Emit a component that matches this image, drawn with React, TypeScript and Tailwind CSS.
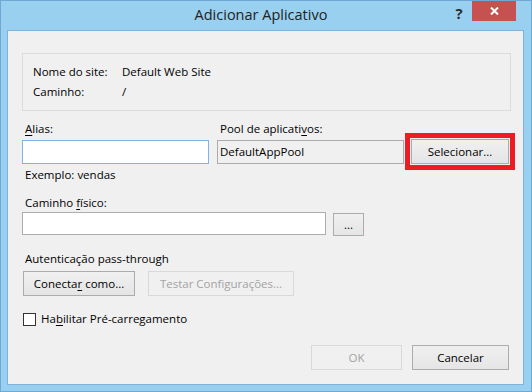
const font = { fontFamily: '"Open Sans", "Noto Sans", Arial, sans-serif' }

function Key({ children }: { children: string }) {
  return <span className="underline decoration-1 underline-offset-[2px]">{children}</span>
}

function Btn({
  children,
  className = '',
  disabled = false,
}: {
  children: React.ReactNode
  className?: string
  disabled?: boolean
}) {
  return (
    <button
      type="button"
      disabled={disabled}
      className={
        'flex h-[25px] items-center justify-center border text-[11.5px] leading-[16px] ' +
        (disabled
          ? 'border-[#d9d9d9] bg-[#f0f0f0] text-[#a3a3a3] '
          : 'border-[#acacac] bg-gradient-to-b from-[#f0f0f0] to-[#e5e5e5] text-black ') +
        className
      }
    >
      <span>{children}</span>
    </button>
  )
}

export default function App() {
  return (
    <div
      style={font}
      className="flex h-[392px] w-[532px] flex-col border border-[#6fa8d6] bg-[#99d0f0] text-[11.5px] leading-[16px] text-black"
    >
      {/* title bar */}
      <div className="grid h-[29px] shrink-0 grid-cols-[1fr_auto_1fr]">
        <div />
        <div className="mr-[10px] pt-[4px] text-[14.5px] leading-[20px] text-[#222]">Adicionar Aplicativo</div>
        <div className="flex items-start justify-end">
          <div className="mt-[4px] w-[26px] text-center text-[15px] font-bold leading-[16px] text-[#2b2b2b]">?</div>
          <div className="mr-[15px] flex h-[20px] w-[44px] items-center justify-center bg-[#c75050]">
            <svg width="9" height="8" viewBox="0 0 9 8">
              <path d="M1 0.5 L8 7.5 M8 0.5 L1 7.5" stroke="white" strokeWidth="2" />
            </svg>
          </div>
        </div>
      </div>

      {/* client area */}
      <div className="mb-[6px] ml-[6px] mr-[7px] flex flex-1 flex-col border border-[#7fb3db] bg-[#f0f0f0] pl-[14px] pr-[12px]">
        <div className="mt-[22px] h-[58px] border border-[#dcdcdc] pl-[10px] pt-[8px] leading-[20px]">
          <div className="grid grid-cols-[89px_1fr]">
            <span>Nome do site:</span>
            <span>Default Web Site</span>
            <span>Caminho:</span>
            <span>/</span>
          </div>
        </div>

        <div className="mt-[10px] flex">
          <div className="w-[187px]">
            <div className="pl-[3px]">
              <Key>A</Key>lias:
            </div>
            <div className="mt-[3px] h-[24px] border border-[#7eb4ea] bg-white" />
          </div>
          <div className="ml-[8px] w-[187px]">
            <div className="pl-[3px]">
              Pool de aplicati<Key>v</Key>os:
            </div>
            <div className="mt-[3px] flex h-[24px] items-center border border-[#acacac] bg-[#f0f0f0] pl-[2px]">
              DefaultAppPool
            </div>
          </div>
          <div className="relative ml-[7px] self-end">
            <Btn className="w-[98px]">
              Selecionar...
            </Btn>
            <div className="pointer-events-none absolute -inset-[6px] border-[5px] border-[#ed1c24]" />
          </div>
        </div>

        <div className="mt-[3px] pl-[3px]">Exemplo: vendas</div>

        <div className="mt-[12px] pl-[3px]">
          Caminho <Key>f</Key>ísico:
        </div>
        <div className="mt-[1px] flex items-start">
          <div className="h-[23px] w-[304px] border border-[#abadb3] bg-white" />
          <Btn className="ml-[7px] mt-[1px] !h-[23px] w-[31px]">...</Btn>
        </div>

        <div className="mt-[15px] pl-[3px]">Autenticação pass-through</div>
        <div className="mt-[4px] flex">
          <Btn className="ml-[1px] w-[112px]">
            Conecta<Key>r</Key> como...
          </Btn>
          <Btn disabled className="ml-[13px] w-[146px]">
            Testar Configurações...
          </Btn>
        </div>

        <label className="mt-[15px] flex items-center">
          <span className="ml-[1px] h-[13px] w-[13px] border border-[#333] bg-white" />
          <span className="ml-[5px]">
            Ha<Key>b</Key>ilitar Pré-carregamento
          </span>
        </label>

        <div className="mt-[18px] flex justify-end pr-[2px]">
          <Btn disabled className="w-[91px]">
            OK
          </Btn>
          <Btn className="ml-[10px] w-[97px]">Cancelar</Btn>
        </div>
      </div>
    </div>
  )
}
